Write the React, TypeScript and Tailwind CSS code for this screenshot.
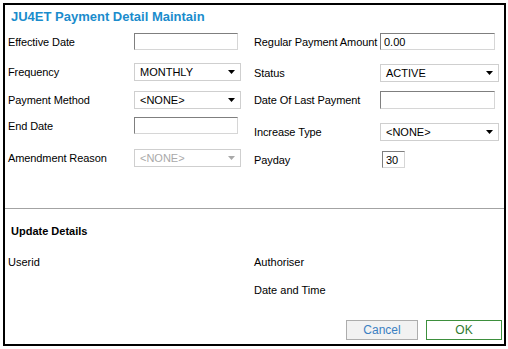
import React from 'react'

const inputCls =
  'h-[17px] border border-t-[#7f7f7f] border-l-[#7f7f7f] border-r-[#d6d6d6] border-b-[#d6d6d6] bg-white px-[3px] text-[11px] text-black outline-none'

function TextBox({ w, value = '', className = '' }: { w: string; value?: string; className?: string }) {
  return <input readOnly value={value} className={`${inputCls} ${w} ${className}`} />
}

function Combo({ w, value, disabled = false }: { w: string; value: string; disabled?: boolean }) {
  return (
    <div
      className={`flex h-[18px] ${w} items-center justify-between border border-[#cfcfcf] bg-white pl-[5px] pr-[5px] text-[11px] ${
        disabled ? 'text-[#a9a9a9]' : 'text-black'
      }`}
    >
      <span>{value}</span>
      <svg width="7" height="4" viewBox="0 0 7 4">
        <path d="M0 0 L7 0 L3.5 4 Z" fill={disabled ? '#a9a9a9' : '#000'} />
      </svg>
    </div>
  )
}

function Row({ h, label, children }: { h: string; label: string; children?: React.ReactNode }) {
  return (
    <div className={`flex ${h} items-start`}>
      <div className="flex w-[126px] shrink-0 items-center whitespace-nowrap text-[11px] tracking-[-0.1px] text-black">
        <span className="leading-[18px]">{label}</span>
      </div>
      {children}
    </div>
  )
}

export default function App() {
  return (
    <div className="h-[349px] w-[508px] bg-white p-[3px] font-['Liberation_Sans',Arial,sans-serif]">
      <div className="flex h-[343px] w-[503px] flex-col border-2 border-black">
        <div className="h-[28px] pl-[6px] pt-[4px] text-[13px] font-bold leading-[16px] text-[#1a8ccc]">
          JU4ET Payment Detail Maintain
        </div>

        <div className="flex h-[175px] pl-[3px]">
          <div className="flex w-[246px] flex-col">
            <Row h="h-[30px]" label="Effective Date">
              <TextBox w="w-[104px]" />
            </Row>
            <Row h="h-[28px]" label="Frequency">
              <Combo w="w-[107px]" value="MONTHLY" />
            </Row>
            <Row h="h-[26px]" label="Payment Method">
              <Combo w="w-[107px]" value="<NONE>" />
            </Row>
            <Row h="h-[32px]" label="End Date">
              <TextBox w="w-[104px]" />
            </Row>
            <Row h="h-[18px]" label="Amendment Reason">
              <Combo w="w-[107px]" value="<NONE>" disabled />
            </Row>
          </div>
          <div className="flex flex-col">
            <Row h="h-[31px]" label="Regular Payment Amount">
              <TextBox w="w-[115px]" value="0.00" />
            </Row>
            <Row h="h-[27px]" label="Status">
              <Combo w="w-[119px]" value="ACTIVE" />
            </Row>
            <Row h="h-[32px]" label="Date Of Last Payment">
              <TextBox w="w-[115px]" className="h-[18px]" />
            </Row>
            <Row h="h-[28px]" label="Increase Type">
              <Combo w="w-[119px]" value="<NONE>" />
            </Row>
            <Row h="h-[18px]" label="Payday">
              <TextBox w="w-[23px]" value="30" className="ml-[2px] px-[2px]" />
            </Row>
          </div>
        </div>

        <div className="h-px bg-[#a3a3a3]" />

        <div className="pl-[6px] pt-[15px] text-[11px] font-bold leading-[14px] text-black">Update Details</div>

        <div className="mt-[14px] flex h-[20px] items-center pl-[3px] text-[11px] text-black">
          <span className="w-[246px]">Userid</span>
          <span>Authoriser</span>
        </div>
        <div className="mt-[8px] flex h-[20px] items-center pl-[3px] text-[11px] text-black">
          <span className="w-[246px]" />
          <span>Date and Time</span>
        </div>

        <div className="mt-[20px] flex justify-end gap-[8px] pr-[2px]">
          <button className="h-[20px] w-[72px] border border-[#adadad] bg-[#f2f2f2] text-[12px] text-[#3b80c2]">
            Cancel
          </button>
          <button className="h-[20px] w-[76px] border border-[#3d8f3d] bg-white text-[12px] text-[#2f7a2f]">
            OK
          </button>
        </div>
      </div>
    </div>
  )
}
